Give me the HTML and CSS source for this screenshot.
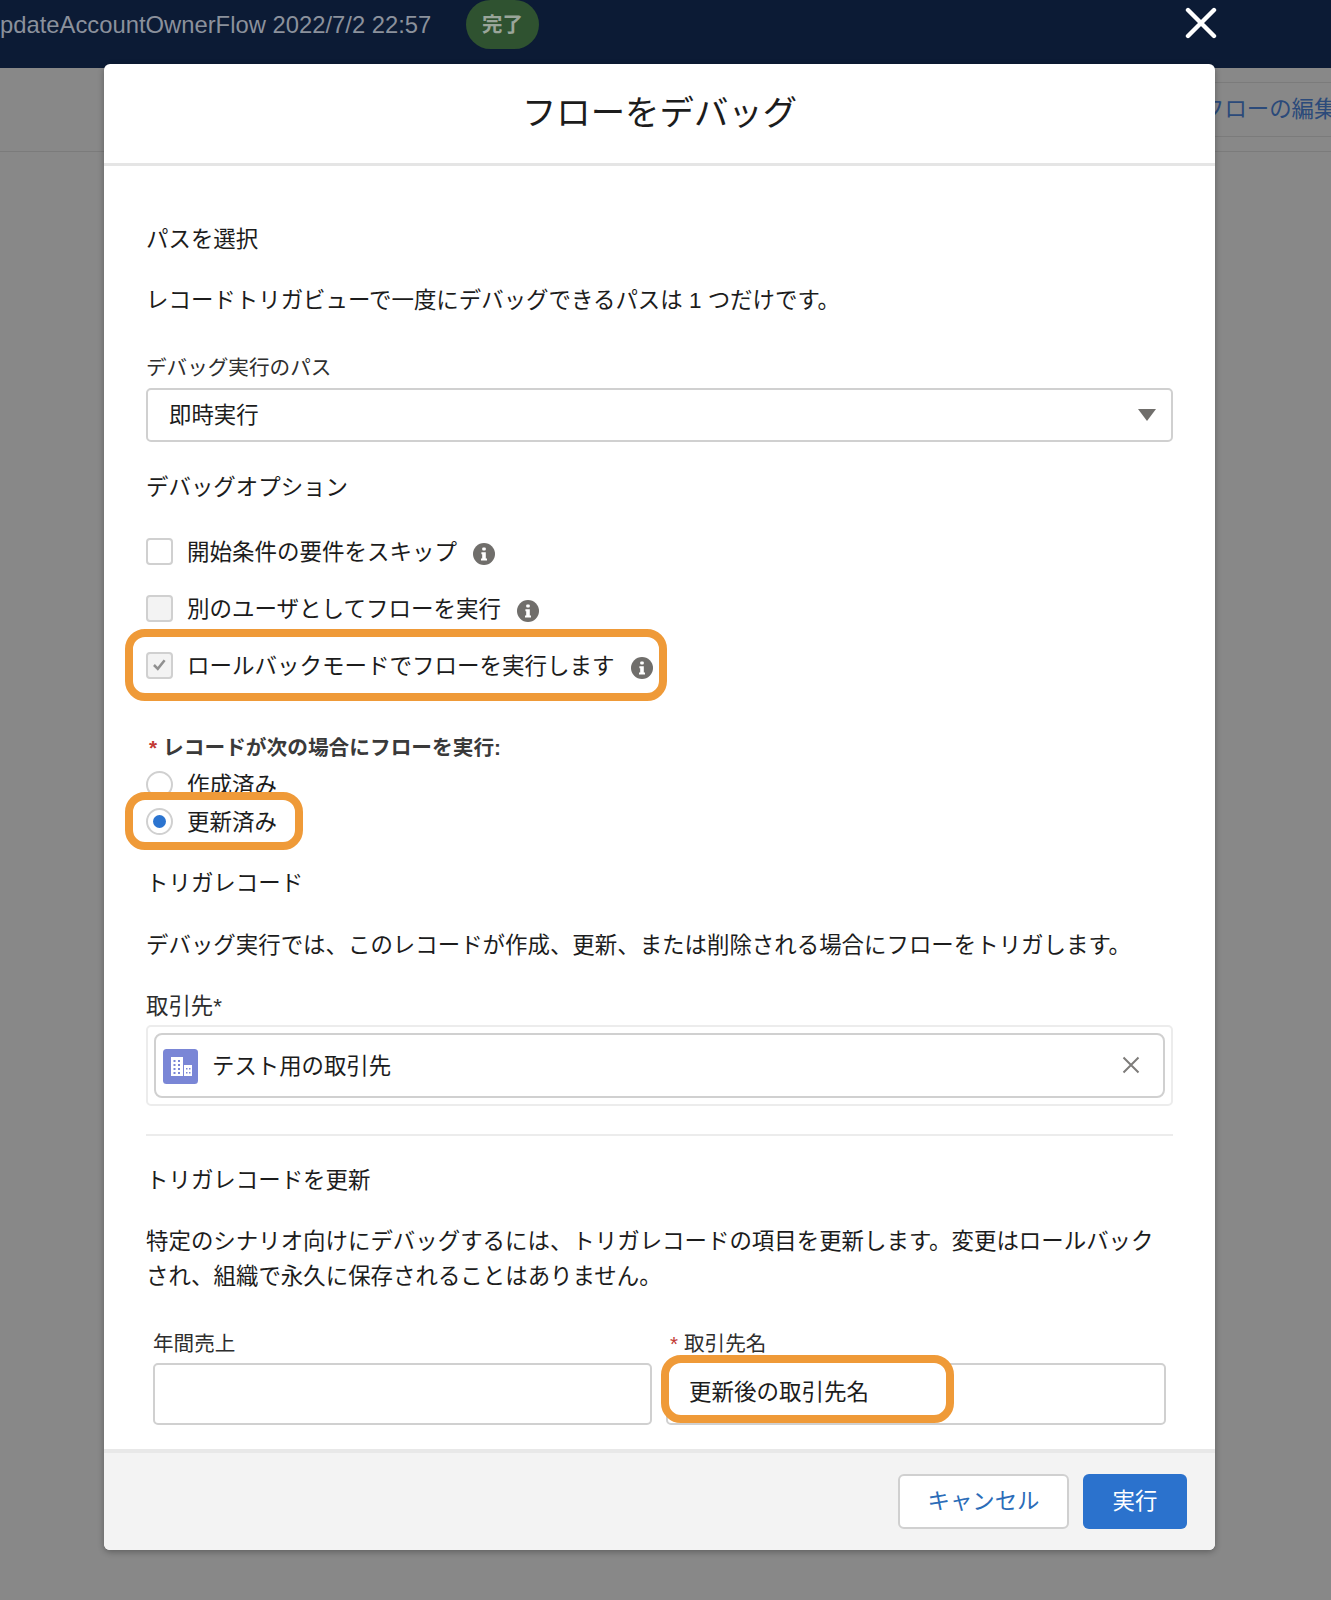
FILE: index.html
```html
<!DOCTYPE html>
<html lang="ja">
<head>
<meta charset="utf-8">
<title>フローをデバッグ</title>
<link rel="stylesheet" href="styles.css">
</head>
<body>
<header class="topbar">
  <span class="flow-name">pdateAccountOwnerFlow 2022/7/2 22:57</span>
  <span class="badge">完了</span>
  <svg class="close" viewBox="0 0 32 32" width="32" height="32"><path d="M3 3 L29 29 M29 3 L3 29" stroke="#fff" stroke-width="4.4" stroke-linecap="round"/></svg>
</header>
<div class="toolbar"><span class="edit-btn">フローの編集</span></div>

<section class="modal">
  <div class="modal-head">フローをデバッグ</div>
  <div class="modal-body">
    <div class="heading">パスを選択</div>
    <p class="text mt27">レコードトリガビューで一度にデバッグできるパスは 1 つだけです。</p>
    <div class="label mt33">デバッグ実行のパス</div>
    <div class="select"><span class="select-value">即時実行</span><i class="caret"></i></div>
    <div class="heading mt28">デバッグオプション</div>

    <div class="check-row mt30">
      <span class="box"></span><span class="opt">開始条件の要件をスキップ</span>
      <svg class="info" viewBox="0 0 22 22"><circle cx="11" cy="11" r="11" fill="#706e6b"/><rect x="9.2" y="4.6" width="3.6" height="3" rx="1" fill="#fff"/><path d="M8.4 9.2h4.4v6.4h1.2v2H8v-2h1.2v-4.4H8.400z" fill="#fff"/></svg>
    </div>
    <div class="check-row mt23">
      <span class="box disabled"></span><span class="opt">別のユーザとしてフローを実行</span>
      <svg class="info" viewBox="0 0 22 22"><circle cx="11" cy="11" r="11" fill="#706e6b"/><rect x="9.2" y="4.6" width="3.6" height="3" rx="1" fill="#fff"/><path d="M8.4 9.2h4.4v6.4h1.2v2H8v-2h1.2v-4.4H8.400z" fill="#fff"/></svg>
    </div>
    <div class="check-row mt23">
      <span class="hl hl-rollback"></span>
      <span class="box disabled"><svg viewBox="0 0 27 27" width="24" height="24"><path d="M7 13.5l4.500 4.500 8-10" fill="none" stroke="#909090" stroke-width="3"/></svg></span><span class="opt">ロールバックモードでフローを実行します</span>
      <svg class="info" viewBox="0 0 22 22"><circle cx="11" cy="11" r="11" fill="#706e6b"/><rect x="9.2" y="4.6" width="3.6" height="3" rx="1" fill="#fff"/><path d="M8.4 9.2h4.4v6.4h1.2v2H8v-2h1.2v-4.4H8.400z" fill="#fff"/></svg>
    </div>

    <div class="label strong mt48"><span class="req">*</span>レコードが次の場合にフローを実行:</div>
    <div class="check-row mt3"><span class="radio"></span><span class="opt">作成済み</span></div>
    <div class="check-row mt3">
      <span class="hl hl-radio"></span>
      <span class="radio on"></span><span class="opt">更新済み</span>
    </div>

    <div class="heading mt28">トリガレコード</div>
    <p class="text mt28">デバッグ実行では、このレコードが作成、更新、または削除される場合にフローをトリガします。</p>
    <div class="label mt27 lookup-label">取引先*</div>
    <div class="lookup-outer">
      <div class="lookup">
        <svg class="acct" viewBox="0 0 35 35" width="35" height="35">
          <rect width="35" height="35" rx="3.5" fill="#7a86d6"/>
          <path d="M8 8h12v19H8zM21 16h8v11h-8z" fill="#fff"/>
          <path d="M10.500 11h2v2h-2zM15 11h2v2h-2zM10.500 15h2v2h-2zM15 15h2v2h-2zM10.500 19h2v2h-2zM15 19h2v2h-2zM10.500 23h2v2h-2zM15 23h2v2h-2zM23 19h1.500v1.500H23zM26 19h1.500v1.500H26zM23 23h1.500v1.500H23zM26 23h1.500v1.500H26z" fill="#7a86d6"/>
        </svg>
        <span class="lookup-text">テスト用の取引先</span>
        <svg class="clear" viewBox="0 0 18 18" width="18" height="18"><path d="M1.500 1.500l15 15M16.500 1.500l-15 15" stroke="#7e7c7a" stroke-width="2"/></svg>
      </div>
    </div>
    <hr class="divider">
    <div class="heading">トリガレコードを更新</div>
    <p class="text para mt27">特定のシナリオ向けにデバッグするには、トリガレコードの項目を更新します。変更はロールバックされ、組織で永久に保存されることはありません。</p>
    <div class="fields">
      <div class="field">
        <div class="label">年間売上</div>
        <div class="input"></div>
      </div>
      <div class="field">
        <div class="label"><span class="req thin">*</span>取引先名</div>
        <div class="input filled"><span class="hl hl-input"></span><span class="value">更新後の取引先名</span></div>
      </div>
    </div>
  </div>
  <footer class="modal-foot">
    <span class="btn neutral">キャンセル</span>
    <span class="btn brand">実行</span>
  </footer>
</section>
</body>
</html>
```

FILE: styles.css
```css
* { box-sizing: border-box; }
html, body { margin: 0; padding: 0; }
body {
  width: 1331px;
  height: 1600px;
  overflow: hidden;
  position: relative;
  background: #888888;
  font-family: "Liberation Sans", "Noto Sans CJK JP", sans-serif;
  color: #1c1c1c;
}
.topbar {
  height: 68px;
  background: #0c1b35;
  display: flex;
  align-items: flex-start;
  position: relative;
}
.flow-name {
  color: #8b919c;
  font-size: 23.8px;
  line-height: 50px;
  width: 466px;
  white-space: nowrap;
}
.badge {
  width: 73px;
  height: 49px;
  border-radius: 25px;
  background: #2f5230;
  color: #9aa59a;
  font-size: 20.5px;
  line-height: 49px;
  text-align: center;
  font-weight: 700;
}
.close { position: absolute; left: 1185px; top: 7px; }
.toolbar {
  height: 84px;
  border-bottom: 1px solid #7b7b7b;
  display: flex;
  justify-content: flex-end;
  padding-top: 14px;
}
.edit-btn {
  height: 55px;
  width: 150px;
  flex: none;
  margin-right: -8px;
  border-top: 1px solid #7b7b7b;
  border-bottom: 1px solid #7b7b7b;
  color: #2b4a7a;
  font-size: 22.4px;
  line-height: 54px;
  padding-left: 13px;
  white-space: nowrap;
}
.modal {
  position: absolute;
  left: 104px;
  top: 64px;
  width: 1111px;
  height: 1486px;
  background: #fff;
  border-radius: 6px;
  box-shadow: 0 2px 6px rgba(0, 0, 0, 0.3);
  display: flex;
  flex-direction: column;
  overflow: hidden;
}
.modal-head {
  height: 102px;
  border-bottom: 3px solid #e5e5e5;
  text-align: center;
  font-size: 34.4px;
  line-height: 98px;
  flex: none;
}
.modal-body {
  flex: 1;
  padding: 56px 42px 0;
}
.heading, .text {
  font-size: 22.45px;
  line-height: 34px;
  height: 34px;
  padding-top: 1px;
  margin: 0;
}
.label {
  font-size: 20.6px;
  line-height: 34px;
  height: 34px;
  padding-top: 1px;
  color: #2e2e2e;
}
.strong { font-weight: 700; color: #3a3a3a; font-size: 20.7px; }
.para { line-height: 34.5px; height: 69px; }
.mt3 { margin-top: 3px; }
.mt23 { margin-top: 23px; }
.mt27 { margin-top: 27px; }
.mt28 { margin-top: 28px; }
.mt30 { margin-top: 30px; }
.mt33 { margin-top: 33px; }
.mt48 { margin-top: 48px; }
.req { color: #c23934; margin: 0 6px 0 3px; }
.req.thin { margin: 0 6px 0 4px; }
.select {
  margin-top: 4px;
  height: 54px;
  border: 2px solid #d0d0d0;
  border-radius: 5px;
  display: flex;
  align-items: center;
  justify-content: space-between;
  padding: 0 15px 0 21px;
  font-size: 22.4px;
}
.select-value { margin-bottom: 4px; }
.caret {
  width: 0;
  height: 0;
  border-left: 9px solid transparent;
  border-right: 9px solid transparent;
  border-top: 12px solid #706e6b;
}
.check-row {
  height: 34px;
  display: flex;
  align-items: center;
  position: relative;
}
.box, .radio {
  position: relative;
  width: 27px;
  height: 27px;
  flex: none;
  border: 2px solid #d0d0d0;
  background: #fff;
  margin-right: 14px;
}
.box { border-radius: 4px; display: flex; align-items: center; justify-content: center; }
.box.disabled { background: #f3f3f3; }
.radio { border-radius: 50%; }
.radio.on::after {
  content: "";
  position: absolute;
  left: 5px;
  top: 5px;
  width: 13px;
  height: 13px;
  border-radius: 50%;
  background: #2b74d0;
}
.opt { font-size: 22.5px; position: relative; margin-bottom: 3px; }
.info { width: 22px; height: 22px; margin: 6px 0 0 16px; position: relative; flex: none; }
.hl {
  position: absolute;
  background: #fff;
  border: 8px solid #ef9a38;
  border-radius: 20px;
}
.hl-rollback { left: -21px; top: -19px; width: 542px; height: 72px; }
.hl-radio { left: -21px; top: -12px; width: 178px; height: 58px; }
.hl-input { left: -7px; top: -10px; width: 293px; height: 68px; }
.lookup-label { font-size: 22.4px; }
.lookup-outer {
  margin-top: 2px;
  height: 81px;
  border: 2px solid #ececec;
  border-radius: 5px;
  padding: 6px;
}
.lookup {
  height: 65px;
  border: 2px solid #d0d0d0;
  border-radius: 8px;
  display: flex;
  align-items: center;
  padding-left: 7px;
}
.acct { flex: none; margin-top: 1px; }
.lookup-text { font-size: 22.4px; margin: 0 0 3px 14px; flex: 1; }
.clear { margin-right: 23px; margin-top: -2px; }
.divider {
  border: 0;
  border-top: 2px solid #ececec;
  margin: 28px 0 27px;
}
.fields {
  margin-top: 33px;
  padding: 0 7px;
  display: grid;
  grid-template-columns: 499px 500px;
  column-gap: 14px;
}
.input {
  margin-top: 3px;
  height: 62px;
  border: 2px solid #d0d0d0;
  border-radius: 5px;
  position: relative;
}
.value {
  position: absolute;
  left: 21px;
  top: 11px;
  font-size: 22.5px;
  line-height: 34px;
}
.modal-foot {
  flex: none;
  height: 101px;
  border-top: 4px solid #e8e8e8;
  background: #f3f3f3;
  display: flex;
  justify-content: flex-end;
  gap: 14px;
  padding: 21px 28px 0 0;
}
.btn {
  height: 55px;
  border-radius: 6px;
  font-size: 22.4px;
  line-height: 55px;
  text-align: center;
}
.neutral { width: 171px; background: #fff; border: 2px solid #d0d0d0; color: #2b6cb8; line-height: 52px; }
.brand { width: 104px; background: #2b72cd; color: #fff; }
```
